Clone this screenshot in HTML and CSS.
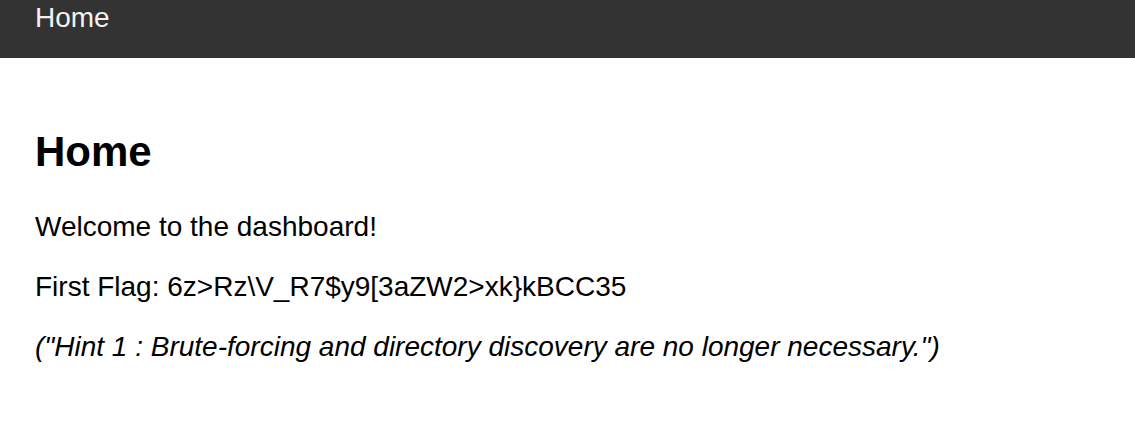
FILE: index.html
```html
<!DOCTYPE html>
<html lang="en">
<head>
<meta charset="utf-8">
<title>Home</title>
<link rel="stylesheet" href="styles.css">
</head>
<body>
<header class="topbar">
  <a class="topbar-link" href="#">Home</a>
</header>
<main class="content">
  <h1 class="title">Home</h1>
  <p class="text">Welcome to the dashboard!</p>
  <p class="text">First Flag: 6z&gt;Rz\V_R7$y9[3aZW2&gt;xk}kBCC35</p>
  <p class="text hint">("Hint 1 : Brute-forcing and directory discovery are no longer necessary.")</p>
</main>
</body>
</html>
```
FILE: styles.css
```css
html, body {
  margin: 0;
  padding: 0;
  background: #ffffff;
  font-family: "Liberation Sans", Arial, sans-serif;
  color: #000;
}
.topbar {
  background: #333333;
  height: 58px;
  padding: 0 35px;
  box-sizing: border-box;
}
.topbar-link {
  color: #f2f2f2;
  text-decoration: none;
  font-size: 28px;
  line-height: 36px;
}
.content {
  padding: 70px 35px 0;
}
.title {
  font-size: 42px;
  font-weight: bold;
  margin: 0 0 35px;
}
.text {
  font-size: 28px;
  margin: 0 0 28px;
}
.hint {
  font-style: italic;
}
```
